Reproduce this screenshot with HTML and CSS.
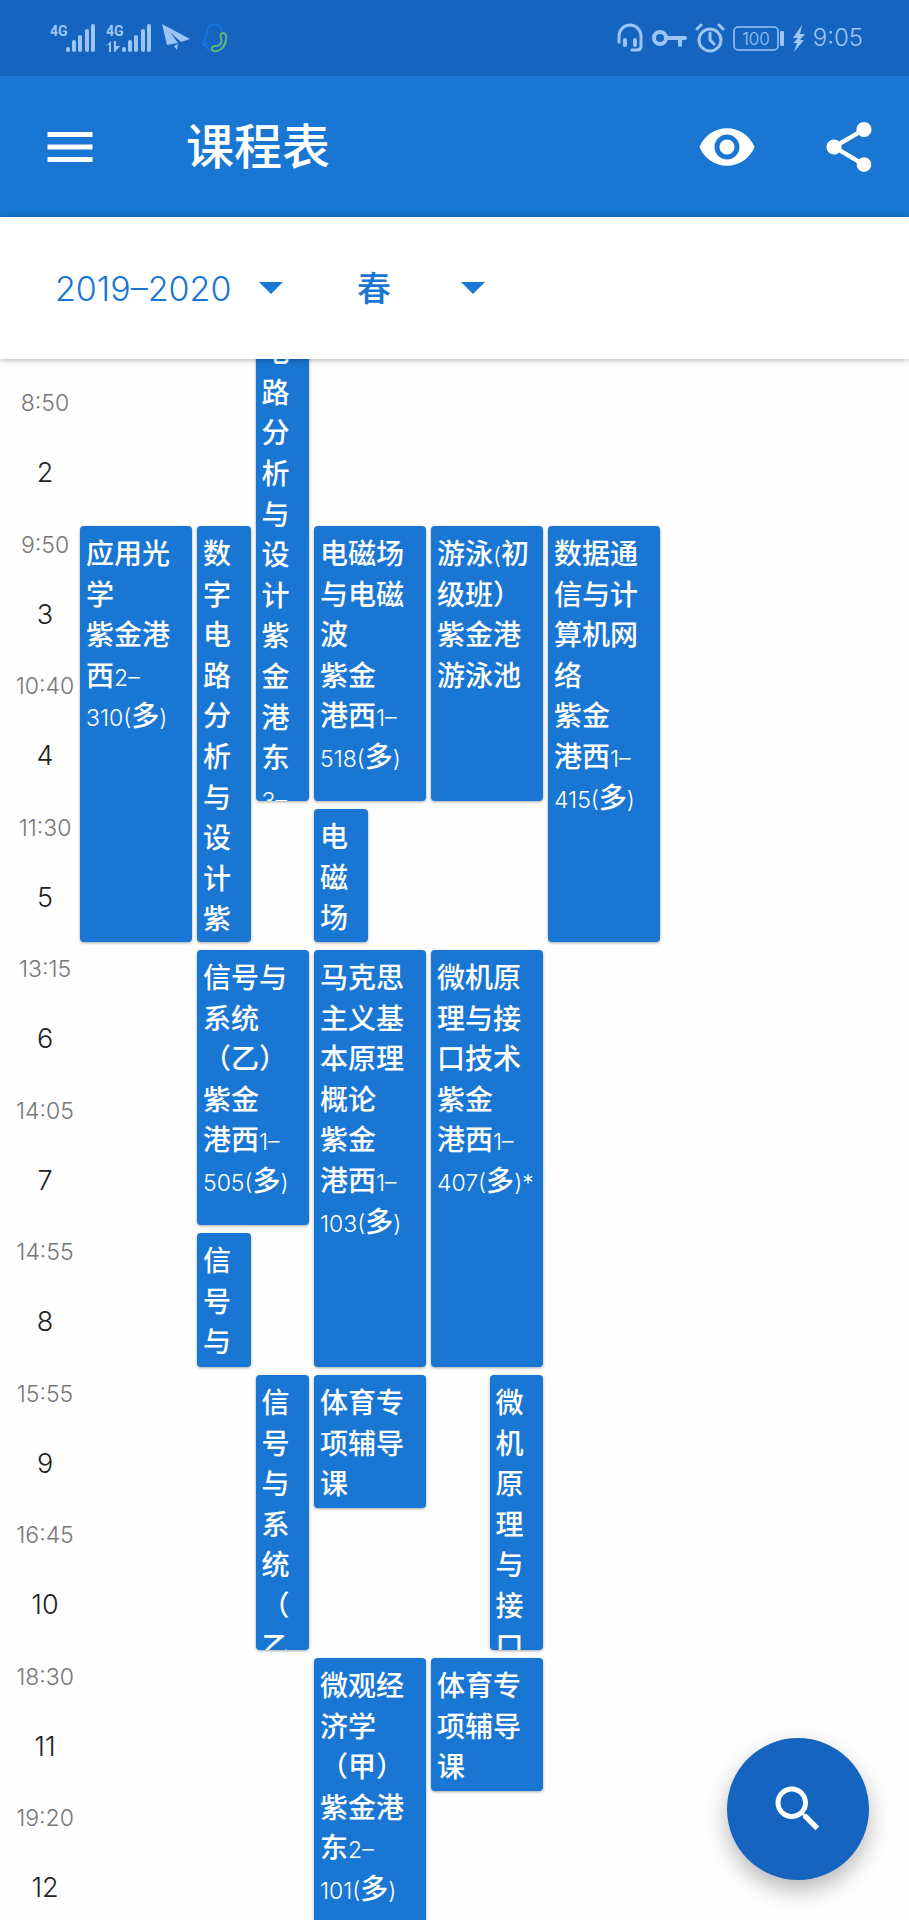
FILE: index.html
```html
<!DOCTYPE html>
<html lang="zh-CN">
<head>
<meta charset="utf-8">
<meta name="viewport" content="width=device-width, initial-scale=1">
<title>课程表</title>
<link rel="stylesheet" href="styles.css">
</head>
<body>
<div class="app">
  <div class="status">
    <div class="status-group">
      <svg width="46" height="30" viewBox="0 0 46 30" fill="currentColor"><text class="net" x="0" y="13">4G</text><rect x="16" y="24" width="4" height="5" rx="2"/><rect x="22" y="17" width="4" height="12" rx="2"/><rect x="28" y="12" width="4" height="17" rx="2"/><rect x="35" y="6" width="4" height="23" rx="2"/><rect x="41" y="1" width="4" height="28" rx="2"/></svg>
      <svg width="46" height="30" viewBox="0 0 46 30" fill="currentColor"><text class="net" x="0" y="13">4G</text><path d="M0 23l5-5v11H3v-7H0zM8 18h2v5h4l-5 6H8z"/><rect x="16" y="24" width="4" height="5" rx="2"/><rect x="22" y="17" width="4" height="12" rx="2"/><rect x="28" y="12" width="4" height="17" rx="2"/><rect x="35" y="6" width="4" height="23" rx="2"/><rect x="41" y="1" width="4" height="28" rx="2"/></svg>
      <svg width="30" height="30" viewBox="0 0 30 30" fill="currentColor"><path d="M0 1l28 15-9 3L8 9l8 11-11 2zM12 23l4-2-1 6z"/></svg>
      <svg width="26" height="32" viewBox="0 0 26 32" fill="none" stroke-width="2"><path d="M20 9C18 0 6 0 5 10c0 4-4 8-4 13 1 2 3-1 3-1 0 4 3 6 6 7" stroke="#1674dc"/><path d="M19 12c4-3 6 1 5 6-1 7-6 12-12 11-4-1-2-5 1-5 3 0 4 0 6-3s-2-6 0-9z" stroke="#5fb878"/></svg>
    </div>
    <div class="status-group status-right">
      <svg width="26" height="30" viewBox="0 0 26 30" fill="none" stroke="currentColor" stroke-width="3" stroke-linecap="round"><path d="M2 19v-6a11 11 0 0 1 22 0v10q0 4-4 4h-5" stroke-linejoin="round"/><path d="M8 17v5M18 17v5" stroke-width="4"/></svg>
      <svg width="36" height="30" viewBox="0 0 36 30" fill="none" stroke="currentColor" stroke-width="4"><circle cx="9" cy="15" r="6"/><path d="M16 15h18M29 15v7" stroke-linecap="round"/></svg>
      <svg width="30" height="30" viewBox="0 0 30 30" fill="none" stroke="currentColor" stroke-width="3" stroke-linecap="round"><circle cx="15" cy="17" r="11"/><path d="M15 10v7l4 4M2 6l4-4M28 6l-4-4"/></svg>
      <svg width="52" height="30" viewBox="0 0 52 30"><rect x="1" y="4" width="44" height="23" rx="4" fill="none" stroke="currentColor" stroke-width="1.5"/><rect x="47" y="8" width="4" height="15" rx="1" fill="currentColor"/><text class="charge" x="23" y="22" text-anchor="middle" fill="currentColor">100</text></svg>
      <svg width="12" height="30" viewBox="0 0 12 30" fill="currentColor"><path d="M9 2L0 15h5l-5 5h4L1 29l10-12H7l5-6H7z"/></svg>
      <span class="clock">9:05</span>
    </div>
  </div>

  <header class="appbar">
    <button class="icon-btn" aria-label="菜单"><svg viewBox="0 0 24 24" fill="currentColor"><path d="M3 18h18v-2H3v2zm0-5h18v-2H3v2zm0-7v2h18V6H3z"/></svg></button>
    <h1 class="title">课程表</h1>
    <button class="icon-btn" aria-label="显示"><svg viewBox="0 0 24 24" fill="currentColor"><path d="M12 4.500C7 4.500 2.730 7.610 1 12c1.730 4.390 6 7.500 11 7.500s9.270-3.110 11-7.500c-1.730-4.390-6-7.500-11-7.500zM12 17c-2.760 0-5-2.240-5-5s2.240-5 5-5 5 2.240 5 5-2.240 5-5 5zm0-8c-1.660 0-3 1.340-3 3s1.340 3 3 3 3-1.340 3-3-1.340-3-3-3z"/></svg></button>
    <button class="icon-btn" aria-label="分享"><svg viewBox="0 0 24 24" fill="currentColor"><path d="M18 16.080c-.76 0-1.440.3-1.960.77L8.910 12.700c.05-.23.09-.46.09-.7s-.04-.47-.09-.7l7.050-4.110c.54.5 1.250.81 2.040.81 1.660 0 3-1.340 3-3s-1.340-3-3-3-3 1.340-3 3c0 .24.04.47.09.7L8.040 9.810C7.500 9.310 6.790 9 6 9c-1.660 0-3 1.340-3 3s1.340 3 3 3c.79 0 1.500-.31 2.040-.81l7.120 4.160c-.05.21-.08.43-.08.65 0 1.610 1.310 2.920 2.920 2.920s2.920-1.310 2.920-2.920-1.310-2.920-2.920-2.920z"/></svg></button>
  </header>

  <div class="filters">
    <div class="picker picker-year">
      <select aria-label="学年"><option>2019–2020</option></select>
      <svg class="caret" viewBox="0 0 24 12" fill="currentColor"><path d="M0 0h24L12 12z"/></svg>
    </div>
    <div class="picker picker-term">
      <select aria-label="学期"><option>春</option></select>
      <svg class="caret" viewBox="0 0 24 12" fill="currentColor"><path d="M0 0h24L12 12z"/></svg>
    </div>
  </div>

  <main class="scroller">
    <div class="schedule">
      <div class="slot r2"><time>8:50</time><b>2</b></div>
      <div class="slot r3"><time>9:50</time><b>3</b></div>
      <div class="slot r4"><time>10:40</time><b>4</b></div>
      <div class="slot r5"><time>11:30</time><b>5</b></div>
      <div class="slot r6"><time>13:15</time><b>6</b></div>
      <div class="slot r7"><time>14:05</time><b>7</b></div>
      <div class="slot r8"><time>14:55</time><b>8</b></div>
      <div class="slot r9"><time>15:55</time><b>9</b></div>
      <div class="slot r10"><time>16:45</time><b>10</b></div>
      <div class="slot r11"><time>18:30</time><b>11</b></div>
      <div class="slot r12"><time>19:20</time><b>12</b></div>

      <article class="course mon r3 n3">应用光<br>学<br>紫金港<br>西<i>2–</i><br><i>310(</i>多<i>)</i></article>

      <article class="course tue-a r3 n3">数字电路分析与设计紫</article>
      <article class="course tue-b r1 n4">数字电路分析与设计紫金港东<br><i>3–</i></article>
      <article class="course tue r6 n2">信号与<br>系统<br>（乙）<br>紫金<br>港西<i>1–</i><br><i>505(</i>多<i>)</i></article>
      <article class="course tue-a r8 n1">信号与</article>
      <article class="course tue-b r9 n2">信号与系统（乙</article>

      <article class="course wed r3 n2">电磁场<br>与电磁<br>波<br>紫金<br>港西<i>1–</i><br><i>518(</i>多<i>)</i></article>
      <article class="course wed-a r5 n1">电磁场</article>
      <article class="course wed r6 n3">马克思<br>主义基<br>本原理<br>概论<br>紫金<br>港西<i>1–</i><br><i>103(</i>多<i>)</i></article>
      <article class="course wed r9 n1">体育专<br>项辅导<br>课</article>
      <article class="course wed r11 n2">微观经<br>济学<br>（甲）<br>紫金港<br>东<i>2–</i><br><i>101(</i>多<i>)</i></article>

      <article class="course thu r3 n2">游泳<i>(</i>初<br>级班）<br>紫金港<br>游泳池</article>
      <article class="course thu r6 n3">微机原<br>理与接<br>口技术<br>紫金<br>港西<i>1–</i><br><i>407(</i>多<i>)*</i></article>
      <article class="course thu-b r9 n2">微机原理与接口</article>
      <article class="course thu r11 n1">体育专<br>项辅导<br>课</article>

      <article class="course fri r3 n3">数据通<br>信与计<br>算机网<br>络<br>紫金<br>港西<i>1–</i><br><i>415(</i>多<i>)</i></article>
    </div>
  </main>

  <button class="fab" aria-label="搜索"><svg viewBox="0 0 24 24" fill="currentColor"><path d="M15.500 14h-.79l-.28-.27C15.410 12.590 16 11.110 16 9.500 16 5.910 13.090 3 9.500 3S3 5.910 3 9.500 5.910 16 9.500 16c1.610 0 3.090-.59 4.230-1.570l.27.28v.79l5 4.990L20.490 19l-4.990-5zm-6 0C7.010 14 5 11.990 5 9.500S7.010 5 9.500 5 14 7.010 14 9.500 11.990 14 9.500 14z"/></svg></button>
</div>
</body>
</html>
```
FILE: styles.css
```css
* { box-sizing: border-box; }

body {
  margin: 0;
  background: #fefefe;
  font-family: Inter, "Noto Sans CJK SC", sans-serif;
  font-weight: 300;
}

button {
  padding: 0;
  border: 0;
  background: none;
  color: inherit;
  cursor: pointer;
}

svg { display: block; flex: none; }

.app {
  display: flex;
  flex-direction: column;
  height: 100vh;
  overflow: hidden;
}

/* System status bar */
.status {
  display: flex;
  justify-content: space-between;
  align-items: center;
  flex: none;
  height: 76px;
  padding: 0 46px 0 50px;
  background: #1565c0;
  color: #9cc5f5;
}
.status-group { display: flex; align-items: center; gap: 10px; }
.status-right { gap: 8px; }
.net { font: 700 14px Roboto, sans-serif; }
.charge { font-size: 17px; }
.clock { font-size: 24px; line-height: 30px; }

/* Title bar */
.appbar {
  display: flex;
  align-items: center;
  flex: none;
  height: 141px;
  padding: 0 30px 0 40px;
  gap: 62px;
  background: #1976d2;
  color: #fff;
}
.icon-btn { flex: none; width: 60px; height: 60px; }
.title {
  flex: 1;
  margin: 0;
  padding-left: 24px;
  font-size: 48px;
  font-weight: 500;
  line-height: 60px;
}

/* Year and term pickers */
.filters {
  position: relative;
  z-index: 1;
  display: flex;
  align-items: center;
  flex: none;
  gap: 74px;
  height: 142px;
  padding: 0 55px;
  background: #fff;
  box-shadow: 0 1px 6px rgba(0, 0, 0, 0.3);
  color: #1976d2;
}
.picker { display: grid; align-items: center; }
.picker-year { width: 228px; }
.picker-term { width: 128px; }
.picker > * { grid-area: 1 / 1; }
.picker select {
  appearance: none;
  width: 100%;
  height: 60px;
  margin: 0;
  padding: 0;
  border: 0;
  background: none;
  color: inherit;
  font: inherit;
  font-size: 34px;
}
.picker-term select { font-weight: 500; }
.caret { justify-self: end; width: 24px; height: 12px; pointer-events: none; }

/* Timetable */
.scroller {
  flex: 1;
  min-height: 0;
  overflow-y: auto;
  scrollbar-width: none;
}
.schedule {
  display: grid;
  grid-template-columns: 75px repeat(14, minmax(0, 1fr));
  grid-template-rows: repeat(6, 133px 134px);
  gap: 8px 5px;
  margin-top: -116px;
  padding-right: 15px;
}
.slot {
  grid-column: 1;
  display: flex;
  flex-direction: column;
  align-items: center;
  gap: 40px;
  padding: 4px 0 0 15px;
  color: #222;
}
.slot time { color: #777; font-size: 23px; line-height: 30px; }
.slot b { font-size: 27px; font-weight: 300; line-height: 30px; }

.course {
  overflow: hidden;
  padding: 8px 5px 0 6px;
  border-radius: 4px;
  background: #1976d2;
  box-shadow: 0 1px 3px rgba(0, 0, 0, 0.35);
  color: #fff;
  font-size: 28px;
  font-weight: 500;
  line-height: 1.45;
  line-break: anywhere;
}
.course i { font-size: 23px; font-style: normal; font-weight: 300; line-height: 1; }

.mon { grid-column: 2 / span 2; }
.tue { grid-column: 4 / span 2; }
.tue-a { grid-column: 4; }
.tue-b { grid-column: 5; }
.wed { grid-column: 6 / span 2; }
.wed-a { grid-column: 6; }
.thu { grid-column: 8 / span 2; }
.thu-b { grid-column: 9; }
.fri { grid-column: 10 / span 2; }

.r1 { grid-row-start: 1; }
.r2 { grid-row-start: 2; }
.r3 { grid-row-start: 3; }
.r4 { grid-row-start: 4; }
.r5 { grid-row-start: 5; }
.r6 { grid-row-start: 6; }
.r7 { grid-row-start: 7; }
.r8 { grid-row-start: 8; }
.r9 { grid-row-start: 9; }
.r10 { grid-row-start: 10; }
.r11 { grid-row-start: 11; }
.r12 { grid-row-start: 12; }

.n1 { grid-row-end: span 1; }
.n2 { grid-row-end: span 2; }
.n3 { grid-row-end: span 3; }
.n4 { grid-row-end: span 4; }

/* Floating search button */
.fab {
  position: fixed;
  right: 40px;
  bottom: 40px;
  z-index: 2;
  display: grid;
  place-items: center;
  width: 142px;
  height: 142px;
  border-radius: 50%;
  background: #1565c0;
  box-shadow: 0 10px 22px rgba(0, 0, 0, 0.28);
  color: #fff;
}
.fab svg { width: 60px; height: 60px; }
```
